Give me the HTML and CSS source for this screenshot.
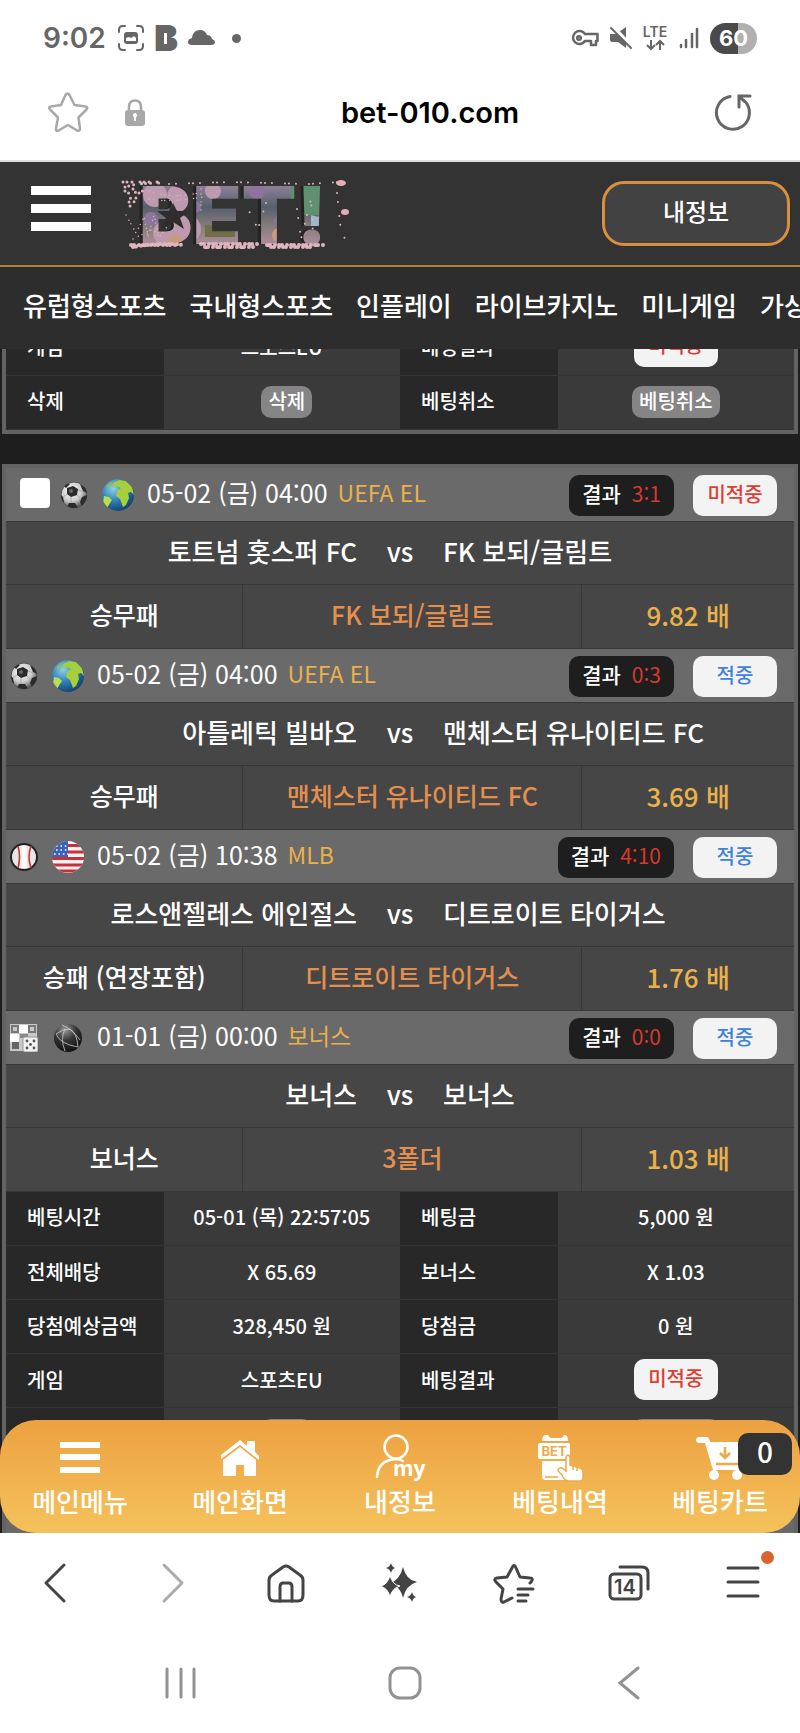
FILE: index.html
```html
<!DOCTYPE html>
<html lang="ko">

<head>
    <meta charset="UTF-8">
    <meta name="viewport" content="width=device-width, initial-scale=1.0">
    <title>bet-010.com</title>
    <link rel="stylesheet" href="styles.css">
</head>

<body>
    <!-- shared icons -->
    <svg width="0" height="0" class="defs" aria-hidden="true">
        <defs>
            <radialGradient id="ballShade" cx=".4" cy=".35" r=".65">
                <stop offset="0" stop-color="#fff" />
                <stop offset=".6" stop-color="#ccc" />
                <stop offset="1" stop-color="#555" />
            </radialGradient>
            <radialGradient id="sea" cx=".35" cy=".3" r=".75">
                <stop offset="0" stop-color="#8fd0ea" />
                <stop offset=".5" stop-color="#2f83b8" />
                <stop offset="1" stop-color="#173f6b" />
            </radialGradient>
            <radialGradient id="dark" cx=".4" cy=".2" r=".8">
                <stop offset="0" stop-color="#999" />
                <stop offset=".5" stop-color="#333" />
                <stop offset="1" stop-color="#111" />
            </radialGradient>
            <clipPath id="round"><circle cx="16" cy="16" r="16" /></clipPath>
            <clipPath id="ballClip"><circle cx="14" cy="14" r="13" /></clipPath>
        </defs>
        <symbol id="soccer" viewBox="0 0 28 28">
            <circle cx="14" cy="14" r="13" fill="url(#ballShade)" stroke="#555" />
            <g clip-path="url(#ballClip)" fill="#2b2b2b">
                <path d="M7 7l6-2 5 3-1 6-6 2-4-3z" />
                <path d="M20 3l7 5v4l-4-2zM22 16l5-2v9l-5 2-2-4zM9 22l6 0 3 5-6 2-5-3zM0 13l3 3 1 5-3 1zM4 5l4-3 2 1-4 4z" />
                <path d="M18 9l5 2M17 14l4 4M11 16l0 6M7 13l-4 3" stroke="#aaa" />
            </g>
            <circle cx="11" cy="10" r="2" fill="#667" />
        </symbol>
        <symbol id="globe" viewBox="0 0 32 32">
            <circle cx="16" cy="16" r="16" fill="url(#sea)" />
            <g clip-path="url(#round)">
                <path d="M11 4l6-3 7 1 6 6 2 8-3-3-3 1 1 5-3 7-3 2-3-8-4-3 1-5 4-3-4-2-4 2z" fill="#a5cf3d" />
                <path d="M2 17l5 1 3 3-2 3-3 5-4-6z" fill="#b9dc55" />
                <path d="M5 7l5-4-1 4-3 3z" fill="#8fc05a" />
            </g>
        </symbol>
        <symbol id="usa" viewBox="0 0 32 32">
            <g clip-path="url(#round)">
                <rect width="32" height="32" fill="#f5f1f1" />
                <path d="M0 4.5h32M0 11h32M0 17.5h32M0 24h32M0 30h32" stroke="#c8303a" stroke-width="3.2" />
                <rect width="16" height="16" fill="#3a63b5" />
                <path d="M4 5h12M4 9h12M2 13h14" stroke="#fff" stroke-width="1.6" stroke-dasharray="1.6 2.8" />
            </g>
        </symbol>
        <symbol id="baseball" viewBox="0 0 28 28">
            <circle cx="14" cy="14" r="13" fill="#e6e6e6" stroke="#222" stroke-width="2" />
            <path d="M8 3q3 11 0 22M21 3q-4 11 0 22" stroke="#c33" stroke-width="1.6" fill="none" />
            <path d="M14 3v22" stroke="#fff" stroke-width="5" />
        </symbol>
        <symbol id="dice" viewBox="0 0 28 28">
            <rect width="27" height="27" fill="#c9c9c9" />
            <path d="M9 1h10v8H9zM0 10h9v8H0z" fill="#fff" />
            <path d="M2 2h6v6H2zM19 2h6v6h-6z" fill="none" stroke="#777" stroke-width="2" />
            <rect x="2" y="18" width="7" height="7" fill="#666" />
            <path d="M10 10h8v4h-8z" fill="#888" />
            <rect x="13" y="13" width="15" height="15" rx="2" fill="#f2f2f2" stroke="#999" />
            <g fill="#555">
                <circle cx="17" cy="17" r="1.4" /><circle cx="24" cy="17" r="1.4" />
                <circle cx="20.500" cy="20.500" r="1.400" />
                <circle cx="17" cy="24" r="1.4" /><circle cx="24" cy="24" r="1.4" />
            </g>
        </symbol>
        <symbol id="net" viewBox="0 0 32 32">
            <circle cx="16" cy="16" r="14" fill="url(#dark)" />
            <path d="M4 12q6-5 14-5 7 4 8 18M13 7q-5 10 0 22M10 3q10 4 18 15M4 12q4 10 22 13" fill="none" stroke="#ccc" stroke-width=".8" />
        </symbol>
    </svg>

    <div class="status-bar">
        <div class="status-left">
            <span class="clock">9:02</span>
            <svg width="26" height="26" viewBox="0 0 26 26" fill="none" stroke="#666" stroke-width="2" stroke-linecap="round">
                <path d="M1 7V5q0-4 4-4h2M19 1h2q4 0 4 4v2M25 19v2q0 4-4 4h-2M7 25H5q-4 0-4-4v-2" />
                <rect x="6" y="7" width="14" height="12" rx="3" fill="#666" stroke="none" />
                <path d="M8 16v-3l3-1 2 1 3-2 2 2v3z" fill="#fff" stroke="none" />
            </svg>
            <svg width="20" height="26" viewBox="0 0 20 26">
                <text x="-2" y="26" class="app-letter">B</text>
                <rect x="5" y="3" width="9" height="20" fill="#666" />
                <rect x="8" y="8" width="3" height="11" fill="#fff" />
            </svg>
            <svg width="27" height="16" viewBox="0 0 27 16">
                <path d="M4 15q-4 0-4-3t4-4q1-8 8-8 5 0 7 5 4 0 5 4 3 1 3 3 0 3-4 3z" fill="#666" />
            </svg>
            <span class="dot"></span>
        </div>
        <div class="status-right">
            <svg width="28" height="18" viewBox="0 0 28 18" fill="none" stroke="#666" stroke-width="2.500">
                <path d="M14 5h12.500v7H25v4h-5v-4h-6a6.500 6.500 0 1 1 0-7z" stroke-linejoin="round" />
                <circle cx="8" cy="9" r="1.800" />
            </svg>
            <svg width="22" height="24" viewBox="0 0 22 24">
                <path d="M0 8h6l10-7v21l-8-6H2q-2 0-2-3z" fill="#666" />
                <path d="M2 0l20 21" stroke="#fff" stroke-width="4" />
                <path d="M1 2l20 20" stroke="#666" stroke-width="2" stroke-linecap="round" />
            </svg>
            <svg width="25" height="26" viewBox="0 0 25 26">
                <text x="12" y="12" text-anchor="middle" class="lte">LTE</text>
                <path d="M8 15v9M4 20l4 4 4-4M17 25v-9M13 20l4-4 4 4" fill="none" stroke="#666" stroke-width="2" />
            </svg>
            <svg width="20" height="22" viewBox="0 0 20 22" stroke="#666" stroke-width="2.500" stroke-linecap="round">
                <path d="M2 18v2M7 13v7M13 7v13M18 2v18" />
            </svg>
            <span class="battery">60</span>
        </div>
    </div>

    <div class="address-bar">
        <svg width="40" height="40" viewBox="0 0 40 40" fill="none" stroke="#a8a8a8" stroke-width="2.500" stroke-linejoin="round">
            <path d="M17.500 3q2-3 4 0l5 10 11 1.500q3 1 1 3l-8 8 1.500 11q0 3-3 2L20 33l-9.500 5.500q-3 1-2.500-2l2-11-8-8q-2-2 1-3L13 13z" />
        </svg>
        <svg class="lock" width="20" height="27" viewBox="0 0 20 27">
            <path d="M4 12V8q0-6.500 6-6.500T16 8v4" fill="none" stroke="#a8a8a8" stroke-width="2.500" />
            <rect y="11" width="20" height="16" rx="3" fill="#a8a8a8" />
            <path d="M9 22v-4a2 2 0 1 1 2 0v4z" fill="#fff" />
        </svg>
        <span class="url">bet-010.com</span>
        <svg width="37" height="38" viewBox="0 0 37 38" fill="none" stroke="#666" stroke-width="3">
            <path d="M15 3.500a16.500 16.500 0 1 0 14 4" stroke-linecap="round" />
            <path d="M35 3H24v11M24 3l5 5" stroke-linecap="round" />
        </svg>
    </div>

    <header class="site-header">
        <button class="menu-btn" aria-label="메뉴"><span></span><span></span><span></span></button>
        <svg width="228" height="70" viewBox="0 0 228 70">
            <defs>
                <linearGradient id="sky" x1="0" y1="0" x2="0" y2="1">
                    <stop offset="0" stop-color="#a08aa4" />
                    <stop offset=".4" stop-color="#56606d" />
                    <stop offset=".7" stop-color="#8a7f7c" />
                    <stop offset="1" stop-color="#b78fa8" />
                </linearGradient>
                <pattern id="blossom" width="228" height="70" patternUnits="userSpaceOnUse">
                    <rect width="228" height="70" fill="url(#sky)" />
                    <g fill="#bd9aae">
                        <circle cx="34" cy="16" r="12" /><circle cx="60" cy="18" r="14" /><circle cx="92" cy="12" r="8" />
                        <circle cx="44" cy="54" r="12" /><circle cx="66" cy="50" r="14" /><circle cx="205" cy="42" r="9" />
                    </g>
                    <g fill="#8d749f">
                        <circle cx="74" cy="28" r="6" /><circle cx="136" cy="12" r="8" /><circle cx="30" cy="40" r="7" />
                        <circle cx="160" cy="42" r="7" /><circle cx="202" cy="48" r="5" />
                    </g>
                    <g fill="#c79a82">
                        <circle cx="54" cy="62" r="7" /><circle cx="125" cy="58" r="8" /><circle cx="158" cy="56" r="7" /><circle cx="206" cy="62" r="6" />
                    </g>
                    <path d="M84 46h30v12H84z" fill="#6f7048" />
                    <path d="M170 6h58v30h-58z" fill="#5f9170" />
                    <path d="M190 36l22 6v8l-22-2z" fill="#9fb6c9" />
                </pattern>
            </defs>
            <text x="15" y="65" class="logo-text" fill="#222">BET!</text>
            <text x="18" y="65" class="logo-text" fill="url(#blossom)">BET!</text>
            <path d="M52 24l4 8 12 0-9 7 4 11-11-7-11 7 4-11-9-7 12 0z" fill="#2f2d2d" />
            <g fill="none" stroke="#e0b5bf" stroke-linecap="round">
                <path d="M2 3h38M4 8q12-4 34-4" stroke-width="3" stroke-dasharray="0 4 0 5 0 8" />
                <path d="M4 12q10 4 2 14M12 10q8 8-4 18M18 14l8-5" stroke-width="3" stroke-dasharray="0 4 0 6" />
                <path d="M10 66h48M80 65h58M146 66h60M12 68q30-5 50-2M84 68h50M150 68h42" stroke-width="4" stroke-dasharray="0 3 0 5 0 4" />
                <path d="M48 5l60-2 80 2 30-2" stroke-width="2" stroke-dasharray="0 7 0 13 0 4" />
                <path d="M5 36l10 18 8-16 4 20 6-22 5 22 8-10M12 60l20-10 8 10" stroke-width="1.500" stroke-dasharray="0 6 0 4" />
                <path d="M28 12q20 8 50 2M28 20q20 4 54-2M80 10v22" stroke-width="1.500" stroke-dasharray="0 5 0 8 0 3" />
                <path d="M176 30l4 30 10-40 2 36M145 24l-8 26-10-20M216 14l4 40 6 8" stroke-width="2" stroke-dasharray="0 9 0 14" />
            </g>
            <ellipse cx="220" cy="4" rx="5" ry="3" fill="#e3aeb8" />
            <ellipse cx="224" cy="33" rx="4" ry="3" fill="#e3aeb8" />
        </svg>
        <button class="my-btn">내정보</button>
    </header>

    <nav class="site-nav">
        <a href="#">유럽형스포츠</a>
        <a href="#">국내형스포츠</a>
        <a href="#">인플레이</a>
        <a href="#">라이브카지노</a>
        <a href="#">미니게임</a>
        <a href="#">가상게임</a>
    </nav>

    <main>
        <div class="bets">
            <section class="bet">
                <table class="detail">
                    <tr><th>게임</th><td>스포츠EU</td><th>베팅결과</th><td><span class="badge lose">미적중</span></td></tr>
                    <tr><th>삭제</th><td><button class="small-btn delete">삭제</button></td><th>베팅취소</th><td><button class="small-btn">베팅취소</button></td></tr>
                </table>
            </section>

            <section class="bet">
                <div class="match-head first">
                    <input type="checkbox" aria-label="선택">
                    <svg class="sport"><use href="#soccer" /></svg>
                    <svg class="flag"><use href="#globe" /></svg>
                    <span class="date">05-02 (금) 04:00</span>
                    <span class="league">UEFA EL</span>
                    <span class="result">결과 <b>3:1</b></span>
                    <span class="badge lose">미적중</span>
                </div>
                <div class="teams"><span>토트넘 홋스퍼 FC</span><i>vs</i><span>FK 보되/글림트</span></div>
                <div class="pick"><span>승무패</span><span>FK 보되/글림트</span><span>9.82 배</span></div>

                <div class="match-head">
                    <svg class="sport"><use href="#soccer" /></svg>
                    <svg class="flag"><use href="#globe" /></svg>
                    <span class="date">05-02 (금) 04:00</span>
                    <span class="league">UEFA EL</span>
                    <span class="result">결과 <b>0:3</b></span>
                    <span class="badge win">적중</span>
                </div>
                <div class="teams"><span>아틀레틱 빌바오</span><i>vs</i><span>맨체스터 유나이티드 FC</span></div>
                <div class="pick"><span>승무패</span><span>맨체스터 유나이티드 FC</span><span>3.69 배</span></div>

                <div class="match-head">
                    <svg class="sport"><use href="#baseball" /></svg>
                    <svg class="flag"><use href="#usa" /></svg>
                    <span class="date">05-02 (금) 10:38</span>
                    <span class="league">MLB</span>
                    <span class="result">결과 <b>4:10</b></span>
                    <span class="badge win">적중</span>
                </div>
                <div class="teams"><span>로스앤젤레스 에인절스</span><i>vs</i><span>디트로이트 타이거스</span></div>
                <div class="pick"><span>승패 (연장포함)</span><span>디트로이트 타이거스</span><span>1.76 배</span></div>

                <div class="match-head">
                    <svg class="sport"><use href="#dice" /></svg>
                    <svg class="flag"><use href="#net" /></svg>
                    <span class="date">01-01 (금) 00:00</span>
                    <span class="league">보너스</span>
                    <span class="result">결과 <b>0:0</b></span>
                    <span class="badge win">적중</span>
                </div>
                <div class="teams"><span>보너스</span><i>vs</i><span>보너스</span></div>
                <div class="pick"><span>보너스</span><span>3폴더</span><span>1.03 배</span></div>

                <table class="detail">
                    <tr><th>베팅시간</th><td>05-01 (목) 22:57:05</td><th>베팅금</th><td>5,000 원</td></tr>
                    <tr><th>전체배당</th><td>X 65.69</td><th>보너스</th><td>X 1.03</td></tr>
                    <tr><th>당첨예상금액</th><td>328,450 원</td><th>당첨금</th><td>0 원</td></tr>
                    <tr><th>게임</th><td>스포츠EU</td><th>베팅결과</th><td><span class="badge lose">미적중</span></td></tr>
                    <tr><th>삭제</th><td><button class="small-btn delete">삭제</button></td><th>베팅취소</th><td><button class="small-btn">베팅취소</button></td></tr>
                </table>
            </section>

            <section class="bet">
                <div class="match-head first"></div>
            </section>
        </div>

        <nav class="bottom-menu">
            <a href="#">
                <svg width="40" height="48" viewBox="0 0 40 48" stroke="#fff" stroke-width="6">
                    <path d="M0 12h40M0 24h40M0 37h40" />
                </svg>
                메인메뉴
            </a>
            <a href="#">
                <svg width="40" height="48" viewBox="0 0 40 48" fill="#fff">
                    <path d="M1 26v-4L20 7l7 6V8h8v11l4 4v4L20 12z" />
                    <path d="M3 27L20 14l16 13v16H24V32h-8v11H3z" />
                </svg>
                메인화면
            </a>
            <a href="#">
                <svg width="50" height="48" viewBox="0 0 50 48" fill="none" stroke="#fff" stroke-width="2.500" stroke-linecap="round">
                    <circle cx="21" cy="14" r="11.500" />
                    <path d="M2 44Q3 27 21 26q4 0 7 2" />
                    <text x="18" y="43" class="my-text">my</text>
                </svg>
                내정보
            </a>
            <a href="#">
                <svg width="46" height="48" viewBox="0 0 46 48" fill="#fff">
                    <path d="M5 8q0-6 4-6h2q1 3 3 3h10q2 0 3-3h1q3 0 3 6z" />
                    <rect x="1" y="10" width="32" height="16" rx="2" />
                    <path d="M5 28h25v19H9q-4 0-4-4z" />
                    <path d="M31 48q-4-1-6-6l-4-4q0-4 4-3l4 3V24q2-4 4 0v8l10 3q3 1 3 4v5q0 4-3 4z" stroke="#efaa49" stroke-width="1.500" />
                    <path d="M8 44h13M36 33v4M40 34v4" fill="none" stroke="#efaa49" stroke-width="1.500" />
                    <text x="17" y="23" text-anchor="middle" class="bet-text">BET</text>
                </svg>
                베팅내역
            </a>
            <a href="#">
                <svg width="48" height="48" viewBox="0 0 48 48" fill="#fff">
                    <path d="M2 4h9q2 0 3 5h33l-4 28H17L9 10H2q-4-3 0-6z" />
                    <circle cx="18" cy="42" r="5" /><circle cx="41" cy="42" r="5" />
                    <path d="M29 14v10M24 20l5 5 5-5M20 31h24M22 39h14" fill="none" stroke="#efaa49" stroke-width="2.500" />
                </svg>
                베팅카트
                <span class="cart-count">0</span>
            </a>
        </nav>
    </main>

    <div class="browser-bar">
        <button aria-label="뒤로">
            <svg width="40" height="40" viewBox="0 0 40 40"><path d="M27 2L9 20l18 18" /></svg>
        </button>
        <button class="disabled" aria-label="앞으로">
            <svg width="40" height="40" viewBox="0 0 40 40"><path d="M13 2l18 18-18 18" /></svg>
        </button>
        <button aria-label="홈">
            <svg width="40" height="40" viewBox="0 0 40 40">
                <path d="M3 17q0-3 3-5L17 4q3-2 6 0l11 8q3 2 3 5v15q0 6-5 6H8q-5 0-5-6z" />
                <path d="M14 38V24q0-4 3-4h6q3 0 3 4v14" />
            </svg>
        </button>
        <button aria-label="AI">
            <svg class="solid" width="40" height="40" viewBox="0 0 40 40">
                <path d="M23 4q3 13 14 15-11 3-14 16-3-13-14-14 11-4 14-17z" />
                <path d="M10 12q2 10 10 11-8 2-10 11-2-9-10-11 8-1 10-11z" stroke="#fff" />
                <path d="M11 0q1 4 4 5-3 1-4 5-1-4-5-5 4-1 5-5zM32 29q1 4 4 5-3 1-4 5-1-4-5-5 4-1 5-5z" />
            </svg>
        </button>
        <button aria-label="북마크">
            <svg width="40" height="40" viewBox="0 0 40 40">
                <path d="M36 20l1-1q3-4-1-4l-10-1-4-9q-2-5-4 0l-5 9-10 1q-4 1-1 4l7 7-2 10q0 4 3 3l8-4" />
                <path d="M24 26h15M24 32h10M24 38h8" />
            </svg>
        </button>
        <button aria-label="탭">
            <svg width="42" height="40" viewBox="0 0 42 40">
                <rect x="2" y="11" width="31" height="25" rx="4" />
                <path d="M12 4h22q6 0 6 6v16" />
                <text x="17" y="31" text-anchor="middle" class="tab-count">14</text>
            </svg>
        </button>
        <button class="has-dot" aria-label="더보기">
            <svg width="40" height="40" viewBox="0 0 40 40"><path d="M5 5h30M5 19h30M5 33h30" /></svg>
        </button>
    </div>

    <div class="system-bar">
        <button aria-label="최근 앱"><svg width="34" height="34" viewBox="0 0 34 34"><path d="M3 3v28M17 3v28M30 3v28" /></svg></button>
        <button aria-label="홈"><svg width="34" height="34" viewBox="0 0 34 34"><rect x="2" y="2" width="30" height="30" rx="10" /></svg></button>
        <button aria-label="이전"><svg width="34" height="34" viewBox="0 0 34 34"><path d="M26 2L8 17l18 15" /></svg></button>
    </div>
</body>

</html>
```

FILE: styles.css
```css
* {
    box-sizing: border-box;
}

body {
    margin: 0;
    height: 100vh;
    display: flex;
    flex-direction: column;
    background-color: #fff;
    color: #fff;
    font-family: "Noto Sans CJK KR", sans-serif;
    font-weight: 500;
    overflow: hidden;
}

button {
    font: inherit;
    color: inherit;
    padding: 0;
    border: none;
    background: none;
}

a {
    color: inherit;
    text-decoration: none;
}

svg {
    flex-shrink: 0;
    overflow: visible;
}

.defs {
    position: absolute;
}

/* phone status bar */
.status-bar {
    flex: none;
    height: 76px;
    padding: 0 43px;
    display: flex;
    justify-content: space-between;
    align-items: center;
    color: #666;
}

.status-left,
.status-right {
    display: flex;
    align-items: center;
    gap: 12px;
}

.status-right {
    gap: 11px;
}

.clock {
    font: 600 28px "Inter", sans-serif;
}

.app-letter {
    font: 900 36px "Inter", sans-serif;
    fill: #666;
}

.dot {
    width: 9px;
    height: 9px;
    margin-left: 5px;
    border-radius: 50%;
    background-color: #666;
}

.lte {
    font: 600 14px "Inter", sans-serif;
    fill: #666;
}

.battery {
    width: 47px;
    border-radius: 16px;
    background: linear-gradient(to right, #4a4a4a 60%, #b0b0b0 60%);
    color: #fff;
    font: 700 22px/31px "Inter", sans-serif;
    text-align: center;
}

/* address bar */
.address-bar {
    flex: none;
    height: 86px;
    padding: 0 48px 12px;
    display: flex;
    align-items: center;
    border-bottom: 2px solid #ddd;
}

.lock {
    margin-left: 37px;
}

.url {
    flex: 1;
    text-align: center;
    color: #000;
    font: 600 29px "Inter", sans-serif;
}

/* site header */
.site-header {
    flex: none;
    height: 105px;
    padding: 0 10px 0 31px;
    display: flex;
    align-items: center;
    background-color: #333;
    border-bottom: 2px solid #b08236;
}

.menu-btn {
    width: 60px;
    display: flex;
    flex-direction: column;
    gap: 9px;
    margin: 0 30px 10px 0;
}

.menu-btn span {
    height: 9px;
    background-color: #fff;
}

.logo-text {
    font: 900 80px "Inter", sans-serif;
}

.my-btn {
    width: 188px;
    height: 65px;
    margin-left: auto;
    padding-bottom: 5px;
    border: 3px solid #da8f3f;
    border-radius: 22px;
    background-color: #424242;
    font-size: 24px;
    line-height: 32px;
}

.site-nav {
    flex: none;
    height: 82px;
    padding: 0 0 6px 23px;
    display: flex;
    align-items: center;
    gap: 23px;
    background-color: #2d2d2d;
    font-size: 26px;
    line-height: 40px;
    white-space: nowrap;
    overflow: hidden;
}

/* bet list */
main {
    flex: 1;
    min-height: 0;
    position: relative;
    overflow: hidden;
    background-color: #1e1e1e;
}

.bets {
    margin-top: -32px;
}

.bet {
    margin: 0 2px 30px;
    border: 4px solid #636363;
}

.match-head {
    height: 54px;
    padding: 2px 17px 0 4px;
    display: flex;
    align-items: center;
    background-color: #6a6a6a;
    border-bottom: 1px solid #383838;
}

.match-head.first {
    padding-left: 14px;
}

.match-head input {
    appearance: none;
    width: 30px;
    height: 30px;
    margin: 0 10px 4px 0;
    border-radius: 4px;
    background-color: #fff;
}

.sport {
    width: 28px;
    height: 28px;
}

.flag {
    width: 32px;
    height: 32px;
    margin: 0 13px 0 14px;
}

.date,
.league {
    padding-bottom: 6px;
    font-size: 25px;
    font-weight: 400;
    line-height: 32px;
}

.league {
    margin-left: 10px;
    color: #eab04b;
    font-size: 23px;
}

.result {
    margin: 0 19px 0 auto;
    padding: 0 13px 4px;
    border-radius: 10px;
    background-color: #1e1e1e;
    font-size: 21px;
    line-height: 37px;
}

.result b {
    margin-left: 5px;
    color: #d8382e;
    font-weight: 400;
}

.badge {
    display: inline-block;
    width: 84px;
    padding-bottom: 4px;
    border-radius: 10px;
    background-color: #f3f3f3;
    font-size: 20px;
    line-height: 37px;
    text-align: center;
    vertical-align: middle;
}

.lose {
    color: #dd3d33;
}

.win {
    color: #3f82dc;
}

.teams {
    height: 63px;
    padding-bottom: 4px;
    display: grid;
    grid-template-columns: 1fr 86px 1fr;
    align-items: center;
    background-color: #464646;
    border-bottom: 1px solid #383838;
    font-size: 26px;
    line-height: 40px;
}

.teams span:first-child {
    text-align: right;
}

.teams i {
    font-style: normal;
    text-align: center;
}

.pick {
    height: 64px;
    display: grid;
    grid-template-columns: 30% 43% 27%;
    background-color: #464646;
    border-bottom: 1px solid #383838;
    font-size: 25px;
    line-height: 59px;
    text-align: center;
}

.pick span + span {
    border-left: 1px solid #383838;
    color: #e58f4f;
}

.pick span:last-child {
    color: #e9b24a;
    font-size: 26px;
}

.detail {
    width: 100%;
    table-layout: fixed;
    border-collapse: collapse;
    font-size: 20px;
    line-height: 32px;
}

.detail tr {
    height: 54px;
}

.detail th,
.detail td {
    padding: 0 0 2px;
    border-bottom: 1px solid #343434;
    white-space: nowrap;
}

.detail th {
    width: 20%;
    padding-left: 21px;
    background-color: #282828;
    font-weight: 500;
    text-align: left;
}

.detail td {
    width: 30%;
    background-color: #3a3a3a;
    text-align: center;
}

.small-btn {
    padding: 0 7px 2px;
    border-radius: 10px;
    background-color: #858585;
    line-height: 30px;
    vertical-align: middle;
}

.delete {
    margin-left: 10px;
}

/* bottom menu sits over the list */
.bottom-menu {
    position: absolute;
    left: 0;
    right: 0;
    bottom: 0;
    height: 113px;
    padding-top: 13px;
    display: grid;
    grid-template-columns: repeat(5, 1fr);
    border-radius: 36px;
    background: linear-gradient(#eda141, #f4c25b);
    font-size: 26px;
    line-height: 40px;
}

.bottom-menu a {
    position: relative;
    display: flex;
    flex-direction: column;
    align-items: center;
}

.my-text {
    font: 700 21px "Open Sans", sans-serif;
    fill: #fff;
    stroke: none;
}

.bet-text {
    font: 700 13px "Inter", sans-serif;
    fill: #efaa49;
}

.cart-count {
    position: absolute;
    top: 0;
    right: 8px;
    width: 54px;
    padding-bottom: 5px;
    border-radius: 10px;
    background-color: #333;
    font-size: 28px;
    line-height: 37px;
    text-align: center;
}

/* browser toolbar */
.browser-bar {
    flex: none;
    height: 100px;
    display: grid;
    grid-template-columns: repeat(7, 1fr);
}

.browser-bar button,
.system-bar button {
    position: relative;
    display: flex;
    align-items: center;
    justify-content: center;
}

.browser-bar svg {
    fill: none;
    stroke: #444;
    stroke-width: 3;
    stroke-linecap: round;
    stroke-linejoin: round;
}

.browser-bar .disabled svg {
    stroke: #aaa;
}

.browser-bar .solid {
    fill: #444;
    stroke-width: 1;
    stroke: none;
}

.tab-count {
    font: 600 20px "Inter", sans-serif;
    fill: #444;
    stroke: none;
}

.has-dot::after {
    content: "";
    position: absolute;
    top: 18px;
    right: 26px;
    width: 13px;
    height: 13px;
    border-radius: 50%;
    background-color: #d9642e;
}

.system-bar {
    flex: none;
    height: 100px;
    padding: 0 59px 0 69px;
    display: grid;
    grid-template-columns: repeat(3, 1fr);
}

.system-bar svg {
    fill: none;
    stroke: #929292;
    stroke-width: 3;
    stroke-linecap: round;
}
```
